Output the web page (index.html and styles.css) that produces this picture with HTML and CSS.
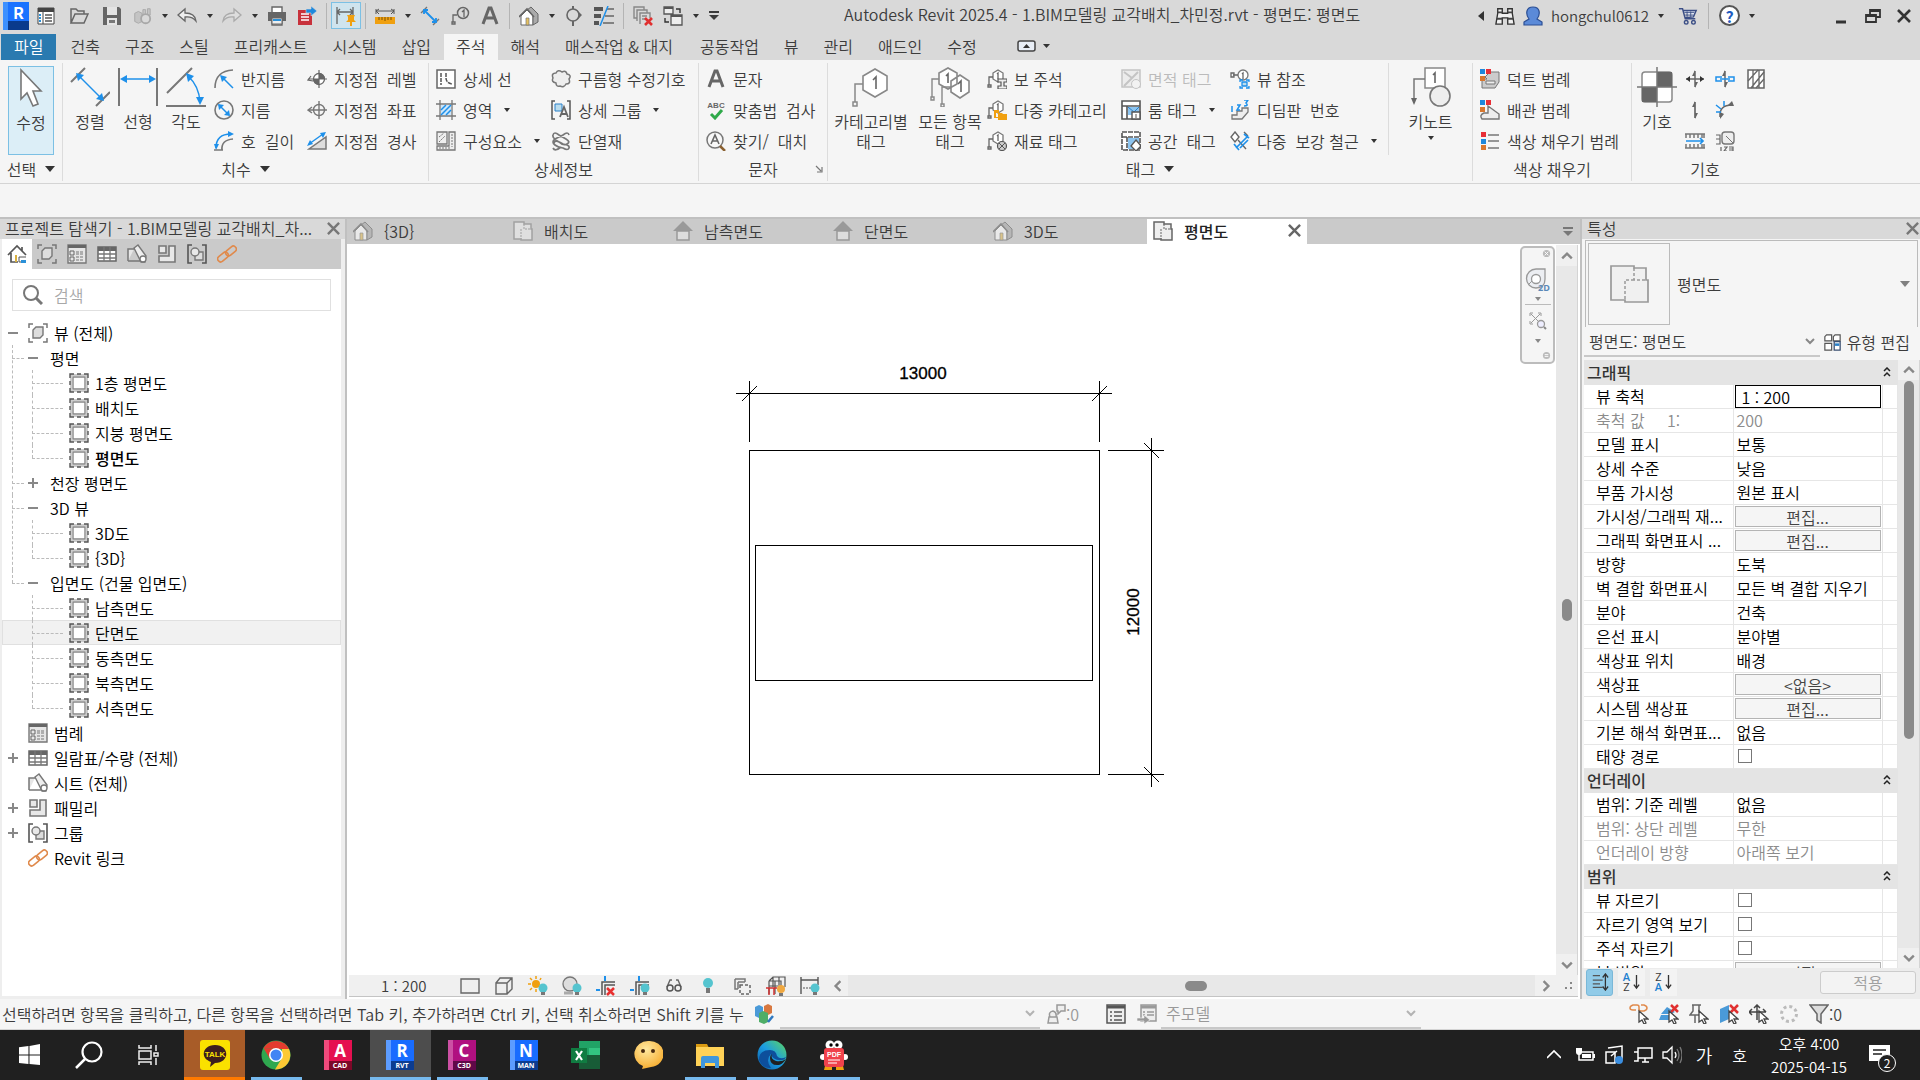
FILE: index.html
```html
<!DOCTYPE html>
<html lang="ko">
<head>
<meta charset="utf-8">
<title>Autodesk Revit 2025.4</title>
<link rel="stylesheet" href="styles.css">
</head>
<body>
<svg class="defs" aria-hidden="true">
  <defs>
    <linearGradient id="gEdge" x1="0" x2="1" y1="1" y2="0"><stop offset="0" stop-color="#0c59a4"/><stop offset=".5" stop-color="#1b9de2"/><stop offset="1" stop-color="#5fd85c"/></linearGradient>
    <radialGradient id="gFace" cx=".4" cy=".3" r=".8"><stop offset="0" stop-color="#ffe9a0"/><stop offset="1" stop-color="#f5a623"/></radialGradient>
  </defs>
  <!-- quick access bar -->
  <symbol id="list" viewBox="0 0 20 20"><path d="M2 2h16v16H2z" fill="#fff" stroke="#444"/><path d="M2 2h16v4H2z" fill="#444"/><path d="M7 6v12" stroke="#444"/><path d="M4 8v8" stroke="#2a90d8" stroke-width="2" stroke-dasharray="2 1"/><path d="M9 9h7M9 12h7M9 15h7" stroke="#555" stroke-width="1.5"/></symbol>
  <symbol id="open" viewBox="0 0 20 20"><path d="M2 17V3h5l2 2h6v3M2 17l4-9h13l-4 9z" fill="none" stroke="#666" stroke-width="1.5"/></symbol>
  <symbol id="save" viewBox="0 0 20 20"><path d="M1 1h16l2 2v16H1z" fill="#666"/><path d="M5 1h10v8H5zM5 12h10v7H5z" fill="#e4e4e4"/><path d="M7 14h6v3H7z" fill="#777"/></symbol>
  <symbol id="sync" viewBox="0 0 22 20"><path d="M3 7l4-2 4 2v9l-4 2-4-2zM12 3h3v6h-3zM17 2h3v7h-3z" fill="#c4c4c4" stroke="#a8a8a8"/><circle cx="15" cy="13" r="5" fill="#d9d9d9" stroke="#a8a8a8" stroke-width="2"/></symbol>
  <symbol id="undo" viewBox="0 0 20 20"><path d="M1 9l7-6v4q10 0 11 8-4-5-11-4v4z" fill="#eee" stroke="#666" stroke-width="1.3"/></symbol>
  <symbol id="redo" viewBox="0 0 20 20"><path d="M19 9l-7-6v4Q2 7 1 15q4-5 11-4v4z" fill="#ddd" stroke="#aaa" stroke-width="1.3"/></symbol>
  <symbol id="print" viewBox="0 0 20 20"><path d="M5 7V1h10v6M5 13h10v6H5z" fill="#fff" stroke="#666" stroke-width="1.4"/><path d="M1 6h18v9H1z" fill="#666"/><path d="M5 12h10v6H5z" fill="#eee" stroke="#666"/><path d="M6 14h8" stroke="#2a90d8" stroke-width="2"/></symbol>
  <symbol id="pdf" viewBox="0 0 20 20"><path d="M1 4h14v15H1z" fill="#c8323c"/><path d="M4 8h8M4 11h8M4 14h8" stroke="#fff" stroke-width="1.5"/><path d="M9 3h5V0l6 5-6 5V7H9z" fill="#1e88dc" stroke="#d9d9d9" stroke-width=".6"/></symbol>
  <symbol id="dimpin" viewBox="0 0 20 20"><path d="M1 1v17M17 1v9M1 6h16M4 3L1 6l3 3M14 3l3 3-3 3" fill="none" stroke="#666" stroke-width="1.3"/><path d="M11 9h8l-1 2v3l2 2H10l2-2v-3zM14 16h2v4h-2z" fill="#f0a010"/></symbol>
  <symbol id="measure" viewBox="0 0 20 20"><path d="M1 3v5M19 3v5M1 5h18M4 3L1 5l3 3M16 3l3 2-3 3" fill="none" stroke="#555"/><path d="M0 11h20v7H0z" fill="#f0a010"/><path d="M4 11v3M7 11v3M10 11v4M13 11v3M16 11v3" stroke="#7a5000"/></symbol>
  <symbol id="aligned" viewBox="0 0 20 20"><path d="M1 7l6-6M13 19l6-6" stroke="#777" stroke-width="1.4"/><path d="M4 4l12 12M4 8V4h4M12 16h4v-4" fill="none" stroke="#1e90ea" stroke-width="1.8"/></symbol>
  <symbol id="tagq" viewBox="0 0 20 20"><circle cx="13" cy="7" r="5.500" fill="none" stroke="#666" stroke-width="1.5"/><path d="M12 6l2-2v7M7 9H3v7M2 16h3v2H2z" fill="none" stroke="#666" stroke-width="1.3"/></symbol>
  <symbol id="letterA" viewBox="0 0 20 20"><path d="M3 18L9 2h2l6 16M6 12h8" fill="none" stroke="#666" stroke-width="3"/></symbol>
  <symbol id="house" viewBox="0 0 20 20"><path d="M2 10l6-6 6 6v9H2z" fill="#fff" stroke="#666"/><path d="M8 4l4-3 7 7v8l-5 3v-9z" fill="#aaa" stroke="#666"/><path d="M0 11l8-8 7 8" fill="none" stroke="#666" stroke-width="1.6"/><path d="M7 12h3v7H7z" fill="#e5c060" stroke="#777" stroke-width=".7"/></symbol>
  <symbol id="section" viewBox="0 0 20 20"><circle cx="9" cy="9" r="6" fill="none" stroke="#666" stroke-width="1.6"/><path d="M9 0v3M9 15v5" stroke="#666" stroke-width="2"/><path d="M12 3l6 6-6 6q6-6 0-12" fill="#666"/></symbol>
  <symbol id="thin" viewBox="0 0 20 20"><path d="M0 3h9M0 10h7M0 17h5" stroke="#555" stroke-width="4"/><path d="M13 3h7M11 10h9M9 17h11" stroke="#666" stroke-width="1.3"/><path d="M14 0L6 20" stroke="#1e90ea" stroke-width="1.5"/></symbol>
  <symbol id="closeh" viewBox="0 0 20 20"><path d="M4 12H1V1h10v3M4 15V4h10v3M7 18V7h10v5M9 10h5M9 13h3" fill="none" stroke="#888" stroke-width="1.4"/><path d="M12 12l7 7M19 12l-7 7" stroke="#e03030" stroke-width="2.600"/></symbol>
  <symbol id="switchw" viewBox="0 0 20 20"><path d="M1 1h9v7H1zM8 9h11v10H8z" fill="#eee" stroke="#555" stroke-width="1.3"/><path d="M1 2h9M8 10h11" stroke="#555" stroke-width="2"/><path d="M13 3h4v4M6 16H2v-4" fill="none" stroke="#333" stroke-width="1.4"/></symbol>
  <symbol id="binoc" viewBox="0 0 22 20"><path d="M1 19l2-12V2h5v5h6V2h5v5l2 12h-7v-7H8v7z" fill="#f0f0f0" stroke="#333" stroke-width="1.5"/><path d="M2 13h6M14 13h6M3 6h5M14 6h5" stroke="#444" stroke-width="2"/></symbol>
  <symbol id="user" viewBox="0 0 20 20"><path d="M6 13q-3-4-2-8 1-4 6-4t6 4q1 4-2 8l5 3v3H1v-3z" fill="#5b8ad8" stroke="#2c4f94" stroke-width="1.2"/></symbol>
  <symbol id="cart" viewBox="0 0 22 20"><path d="M1 2h4l3 11h11M5 4h15l-3 7-9 1" fill="#dfe5f2" stroke="#3c4f86" stroke-width="1.6"/><path d="M7 6h11M8 9h9M10 5v6M14 5v6" stroke="#3c4f86"/><circle cx="9" cy="17" r="2" fill="none" stroke="#3c4f86" stroke-width="1.500"/><circle cx="17" cy="17" r="2" fill="none" stroke="#3c4f86" stroke-width="1.500"/></symbol>
  <symbol id="x" viewBox="0 0 14 14"><path d="M1 1l12 12M13 1L1 13" stroke="currentColor" stroke-width="2.600"/></symbol>
  <symbol id="down" viewBox="0 0 8 6"><path d="M1 1h6L4 5z" fill="#333"/></symbol>
  <symbol id="bigdown" viewBox="0 0 10 8"><path d="M0 1h10L5 7z" fill="#333"/></symbol>
  <symbol id="chev" viewBox="0 0 10 10"><path d="M1 3l4 4 4-4" fill="none" stroke="#888" stroke-width="2"/></symbol>
  <symbol id="menu" viewBox="0 0 10 10"><path d="M0 1h10" stroke="currentColor" stroke-width="2"/><path d="M0 4h10L5 9z" fill="currentColor"/></symbol>
  <!-- ribbon, large -->
  <symbol id="cursor" viewBox="0 0 24 40"><path d="M2 1v29l6-6 6 13 5-2-5-13h8z" fill="#fff" stroke="#777" stroke-width="1.600"/></symbol>
  <symbol id="Laligned" viewBox="0 0 40 40"><path d="M1 15L15 1M26 39L40 25" stroke="#777" stroke-width="2"/><path d="M8 8l24 24" stroke="#1e90ea" stroke-width="1.500"/><path d="M6 6l8 2-6 6zM34 34l-8-2 6-6z" fill="#1e90ea"/></symbol>
  <symbol id="Llinear" viewBox="0 0 40 40"><path d="M1 1v38M39 1v38" stroke="#777" stroke-width="2"/><path d="M4 12h32" stroke="#1e90ea" stroke-width="1.500"/><path d="M2 12l7-4v8zM38 12l-7-4v8z" fill="#1e90ea"/></symbol>
  <symbol id="Langle" viewBox="0 0 40 40"><path d="M0 39h40M1 26L26 1" stroke="#777" stroke-width="2"/><path d="M22 9q11 10 12 26" fill="none" stroke="#1e90ea" stroke-width="1.500"/><path d="M20 6l8 3-6 6zM34 38l-4-8h8z" fill="#1e90ea"/></symbol>
  <symbol id="Ltag" viewBox="0 0 40 40"><path d="M12 9l12-7 12 7v14l-12 7-12-7z" fill="#fff" stroke="#888" stroke-width="1.600"/><path d="M12 17H4v18M2 35h4v4H2z" fill="none" stroke="#888" stroke-width="1.500"/><path d="M22 13l3-3v12" fill="none" stroke="#666" stroke-width="1.600"/></symbol>
  <symbol id="Ltags" viewBox="0 0 40 40"><path d="M9 6l9-5 9 5v11l-9 5-9-5zM21 14l9-6 9 6v11l-9 6-9-6z" fill="#fff" stroke="#888" stroke-width="1.600"/><path d="M9 12H2v18M1 30h3v3H1zM21 20h-9v17M11 37h3v3h-3z" fill="none" stroke="#888" stroke-width="1.400"/><path d="M16 9l2-2v9M28 17l3-3v11" fill="none" stroke="#666" stroke-width="1.600"/></symbol>
  <symbol id="Lkey" viewBox="0 0 40 40"><path d="M14 1h20v20H14z" fill="#fff" stroke="#888" stroke-width="1.500"/><path d="M22 8l2-2v10" fill="none" stroke="#666" stroke-width="1.600"/><path d="M14 12H3v22" fill="none" stroke="#777" stroke-width="1.500"/><path d="M0 31h6l-3 7z" fill="#666"/><circle cx="29" cy="29" r="10" fill="#eee" stroke="#777" stroke-width="1.600"/></symbol>
  <symbol id="Lsym" viewBox="0 0 40 40"><rect x="5" y="5" width="30" height="30" rx="3" fill="#fff" stroke="#888" stroke-width="1.500"/><path d="M20 5h15v15H20zM5 20h15v15H5z" fill="#666"/><path d="M20 0v40M0 20h40" stroke="#777" stroke-width="1.500"/></symbol>
  <!-- ribbon, small -->
  <symbol id="radius" viewBox="0 0 20 20"><path d="M1 19Q1 2 19 1" fill="none" stroke="#777" stroke-width="1.600"/><path d="M9 9l10 10" stroke="#1e90ea" stroke-width="1.500"/><path d="M6 6l7 2-5 5z" fill="#1e90ea"/></symbol>
  <symbol id="diam" viewBox="0 0 20 20"><circle cx="10" cy="10" r="9" fill="none" stroke="#777" stroke-width="1.600"/><path d="M5 5l10 10" stroke="#1e90ea" stroke-width="1.500"/><path d="M4 4l6 1-5 5zM16 16l-6-1 5-5z" fill="#1e90ea"/></symbol>
  <symbol id="arc" viewBox="0 0 20 20"><path d="M8 19Q7 9 19 8" fill="none" stroke="#777" stroke-width="1.700"/><path d="M2 17Q2 3 17 3" fill="none" stroke="#1e90ea" stroke-width="1.500"/><path d="M14 0l6 3-6 3zM0 13h5l-3 6z" fill="#1e90ea"/><path d="M0 19h9" stroke="#777" stroke-width="1.500"/></symbol>
  <symbol id="spotE" viewBox="0 0 20 20"><circle cx="12" cy="10" r="5.500" fill="#fff" stroke="#666" stroke-width="1.300"/><path d="M12 10V4a6 6 0 0 1 6 6zM12 10v6a6 6 0 0 1-6-6z" fill="#666"/><path d="M12 1v18M1 10h19M4 7l-3 4 5 1" fill="none" stroke="#666" stroke-width="1.200"/></symbol>
  <symbol id="spotC" viewBox="0 0 20 20"><circle cx="12" cy="10" r="5.500" fill="none" stroke="#777" stroke-width="1.400"/><path d="M12 1v18M1 10h19M5 7l-4 3 4 3" fill="none" stroke="#777" stroke-width="1.400"/></symbol>
  <symbol id="spotS" viewBox="0 0 20 20"><path d="M2 18h17V6z" fill="#ddd" stroke="#777" stroke-width="1.500"/><path d="M2 13L16 3" stroke="#1e90ea" stroke-width="1.500"/><path d="M0 15l3-6 3 4zM19 1l-6 1 3 5z" fill="#1e90ea"/></symbol>
  <symbol id="dline" viewBox="0 0 20 20"><path d="M1 1h18v18H1z" fill="#fff" stroke="#666" stroke-width="1.500"/><path d="M5 4v12M10 4v5q0 5 6 6" fill="none" stroke="#555" stroke-width="1.500" stroke-dasharray="4 1"/></symbol>
  <symbol id="region" viewBox="0 0 20 20"><path d="M4 0v20M16 0v20M0 4h20M0 16h20" stroke="#777" stroke-width="1.300"/><path d="M5 5h10v10H5z" fill="#cce6fa"/><path d="M5 10l5-5M5 15L15 5M10 15l5-5" stroke="#1e90ea" stroke-width="1.500"/></symbol>
  <symbol id="comp" viewBox="0 0 20 20"><path d="M1 1h10v12H1zM13 1h6v18H1v-4h12z" fill="#eee" stroke="#777" stroke-width="1.300"/><path d="M3 6l5-4M3 11l6-6M16 3v13M3 17h12" stroke="#777" stroke-dasharray="2 1"/></symbol>
  <symbol id="cloud" viewBox="0 0 20 20"><path d="M5 14Q0 13 2 9q-2-5 3-5 2-4 6-1 4-2 5 2 5 1 2 5 2 5-3 5-2 4-6 2-4 1-4-3z" fill="#eee" stroke="#777" stroke-width="1.500"/></symbol>
  <symbol id="dgroup" viewBox="0 0 20 20"><path d="M4 1H1v18h3M16 1h3v18h-3" fill="none" stroke="#555" stroke-width="1.500"/><path d="M4 4h7v7H4z" fill="#bde" stroke="#2a80c8"/><path d="M9 17l4-10 4 10M10 14h6" fill="none" stroke="#666" stroke-width="1.800"/></symbol>
  <symbol id="insul" viewBox="0 0 20 20"><path d="M2 4Q3 0 8 4l7 4q5 3 1 5t-8-2Q1 7 2 4zM18 4q-1-4-6 0L4 8q-4 3 0 6t8 3q5 3 6 0t-6-4Q4 8 3 12M2 17q2 4 8-1" fill="none" stroke="#777" stroke-width="1.700"/></symbol>
  <symbol id="find" viewBox="0 0 20 20"><circle cx="9" cy="9" r="8" fill="#f8f8f8" stroke="#777" stroke-width="1.500"/><path d="M5 13l4-9 4 9M6 10h6" fill="none" stroke="#666" stroke-width="1.600"/><path d="M14 15l5 5" stroke="#8a6030" stroke-width="2.500"/></symbol>
  <symbol id="hextag" viewBox="0 0 20 20"><path d="M6 4l5-3 5 3v6l-5 3-5-3z" fill="#fff" stroke="#777" stroke-width="1.300"/><path d="M10 5l1-1v6M6 8H2v8M1 16h3v2H1z" fill="none" stroke="#666" stroke-width="1.300"/></symbol>
  <symbol id="beam" viewBox="0 0 20 20"><use href="#hextag"/><path d="M11 10h9v3h-3v4h3v3h-9v-3h3v-4h-3z" fill="#eee" stroke="#555" stroke-width="1.200"/></symbol>
  <symbol id="multi" viewBox="0 0 20 20"><use href="#hextag"/><path d="M7 10h5v3h-3v4h2v-4h4l1 1h4v6h-9v-2H7z" fill="#f0a010"/></symbol>
  <symbol id="mat" viewBox="0 0 20 20"><use href="#hextag"/><circle cx="15" cy="15" r="4.500" fill="#ccc" stroke="#555" stroke-width="1.200"/><path d="M12 12l6 6M18 12l-6 6" stroke="#555"/></symbol>
  <symbol id="area" viewBox="0 0 20 20"><path d="M1 1h18v17H1z" fill="#ececec" stroke="#c4c4c4" stroke-width="1.500"/><path d="M3 17L17 3M3 3l8 6" stroke="#c4c4c4" stroke-width="2"/><circle cx="15" cy="15" r="4.500" fill="#f2f2f2" stroke="#c4c4c4"/></symbol>
  <symbol id="room" viewBox="0 0 20 20"><path d="M1 1h18v18H1zM1 6h18M6 6v13" fill="#fff" stroke="#555" stroke-width="1.600"/><path d="M7 7h11v8H7z" fill="#8cc4f0"/><path d="M7 7l6 5 5-5" fill="none" stroke="#2a80c8"/><path d="M11 12h8v7h-8z" fill="#fff" stroke="#555" stroke-width="1.400"/><path d="M15 14v4" stroke="#555"/></symbol>
  <symbol id="space" viewBox="0 0 20 20"><path d="M1 1h18v18H1zM1 6h18M6 6v13" fill="#fff" stroke="#555" stroke-width="1.600" stroke-dasharray="5 1"/><path d="M7 7h11v11H7z" fill="#8cc4f0"/><path d="M15 9l5 6-5 5-5-5z" fill="#fff" stroke="#555" stroke-width="1.300"/></symbol>
  <symbol id="vref" viewBox="0 0 20 20"><circle cx="13" cy="6" r="5" fill="#fff" stroke="#777" stroke-width="1.300"/><path d="M12 5l1-1v6M8 6H3M1 4h3v4H1z" fill="none" stroke="#666" stroke-width="1.300"/><path d="M10 13v-2h3M16 11h3v2M19 17v2h-3M13 19h-3v-2M12 13h5v4h-5z" fill="#bde" stroke="#1e90ea" stroke-width="1.300"/></symbol>
  <symbol id="tread" viewBox="0 0 20 20"><path d="M2 19v-4h5v-4h5V8h6v4l-6 7z" fill="#eee" stroke="#777" stroke-width="1.300"/><path d="M2 6v6M7 5h3l-3 5h3M14 0h4l-2 3q3 3-2 3" fill="none" stroke="#1e90ea" stroke-width="1.500"/></symbol>
  <symbol id="rebar" viewBox="0 0 20 20"><path d="M5 1l4 5-4 5-4-5zM14 1l4 4M8 9l8 9" fill="#fff" stroke="#666" stroke-width="1.400"/><path d="M18 5L6 17M18 9l-8 8M4 13l5 6M14 3l5 4" stroke="#1e90ea" stroke-width="1.700"/></symbol>
  <symbol id="rgb" viewBox="0 0 20 20"><path d="M0 0h5v5H0z" fill="#1e88dc"/><path d="M6 0h5v5H6z" fill="#e83038"/><path d="M0 7h5v5H0z" fill="#d87830"/></symbol>
  <symbol id="duct" viewBox="0 0 20 20"><path d="M5 8l5-5h9v10l-4 6H2v-9h5z" fill="#ccc" stroke="#777"/><path d="M6 12h9v3H6z" fill="#eee" stroke="#777"/><use href="#rgb"/></symbol>
  <symbol id="pipe" viewBox="0 0 20 20"><path d="M8 6l11 8v5H2q-3-4 2-6h4z" fill="#eee" stroke="#777" stroke-width="1.400"/><use href="#rgb"/></symbol>
  <symbol id="fill" viewBox="0 0 20 20"><path d="M1 1h5v5H1z" fill="#e83038"/><path d="M1 8h5v5H1z" fill="#1e88dc"/><path d="M1 14h5v5H1z" fill="#d87830"/><path d="M8 4h11M8 10h11M8 17h11" stroke="#777" stroke-width="1.500"/></symbol>
  <symbol id="span" viewBox="0 0 20 20"><path d="M10 2v16M1 10h18" stroke="#666" stroke-width="1.500"/><path d="M10 1v6H7zM10 19v-6h3z" fill="#666"/><path d="M1 10l4-3v6zM19 10l-4-3v6z" fill="#333"/></symbol>
  <symbol id="bsys" viewBox="0 0 20 20"><path d="M10 2v16" stroke="#666" stroke-width="1.500"/><path d="M10 1v6H7zM10 19v-6h3z" fill="#666"/><path d="M7 8H1v4h6M13 8h6v4h-6M5 10h10" fill="none" stroke="#1e90ea" stroke-width="1.500"/></symbol>
  <symbol id="hatch" viewBox="0 0 20 20"><path d="M2 1h16v18H2z" fill="#fff" stroke="#666" stroke-width="1.500"/><path d="M7 1v18M13 1v18M2 12L12 1M5 19L18 3M10 19l8-9" stroke="#666" stroke-width="1.300"/></symbol>
  <symbol id="sarrow" viewBox="0 0 20 20"><path d="M10 2v16" stroke="#666" stroke-width="1.700"/><path d="M10 1v6H7zM10 19v-6h3z" fill="#666"/></symbol>
  <symbol id="fan" viewBox="0 0 20 20"><path d="M5 17Q4 5 17 5" fill="none" stroke="#666" stroke-width="1.500"/><path d="M19 6h-7l5-5zM5 19v-7l4 2z" fill="#666"/><path d="M1 5l5 4M9 1v5M1 12h5" stroke="#1e90ea" stroke-width="1.500"/></symbol>
  <symbol id="path" viewBox="0 0 20 20"><path d="M0 3h20M0 17h20M1 3v4M5 3v4M9 3v4M13 3v4M17 3v4M19 3v4M1 13v4M5 13v4M9 13v4M13 13v4M17 13v4M19 13v4" stroke="#777" stroke-width="1.500"/><path d="M1 10h17M15 7l3 3-3 3" fill="none" stroke="#1e90ea" stroke-width="1.700"/></symbol>
  <symbol id="p123" viewBox="0 0 20 20"><rect x="7" y="1" width="12" height="12" rx="3" fill="#eee" stroke="#777" stroke-width="1.400"/><path d="M11 5l7 7" stroke="#777"/><path d="M1 4h4v9H1M1 8h4M6 16v4M9 16h3l-3 4h3M14 16h4v4h-4M14 18h4" fill="none" stroke="#666" stroke-width="1.200"/></symbol>
  <!-- project browser -->
  <symbol id="pb-home" viewBox="0 0 20 20"><path d="M1 11l9-9 9 9M4 9v9h7M15 7V3" fill="none" stroke="#555" stroke-width="1.700"/><path d="M8 11h2v7H8z" fill="#d8b040"/><path d="M12 13h7M12 13v5h3" stroke="#555" fill="none"/><path d="M14 16h5v3h-5z" fill="#2a90d8"/></symbol>
  <symbol id="views" viewBox="0 0 20 20"><path d="M1 5V1h4M15 1h4v4M19 15v4h-4M5 19H1v-4" fill="none" stroke="#777" stroke-width="1.500"/><path d="M5 7l3-3h7v8l-3 3H5z" fill="#ddd" stroke="#777" stroke-width="1.400"/></symbol>
  <symbol id="legend" viewBox="0 0 20 20"><path d="M1 1h18v18H1z" fill="#e6e6e6" stroke="#777" stroke-width="1.400"/><path d="M1 1h18v3H1z" fill="#666"/><path d="M3 7h4v4H3zM3 13h4v4H3z" fill="none" stroke="#666"/><path d="M9 8h8M9 10h8M9 13h8M9 16h8" stroke="#777" stroke-width="1.200" stroke-dasharray="3 1"/></symbol>
  <symbol id="sched" viewBox="0 0 20 20"><path d="M1 3h18v14H1z" fill="#fff" stroke="#666" stroke-width="1.500"/><path d="M1 3h18v4H1z" fill="#666"/><path d="M7 3v14M13 3v14M1 10h18M1 14h18" stroke="#777" stroke-width="1.300"/></symbol>
  <symbol id="sheet" viewBox="0 0 20 20"><path d="M1 17V5h6M1 17h14" fill="#e6e6e6" stroke="#777" stroke-width="1.500"/><path d="M7 4l4-3 8 11-1 6h-4z" fill="#eee" stroke="#777" stroke-width="1.400"/><circle cx="16" cy="15" r="3" fill="#fff" stroke="#777" stroke-width="1.300"/></symbol>
  <symbol id="family" viewBox="0 0 20 20"><path d="M2 2h7v7H2zM12 2h6v16H2v-6h10z" fill="#e8e8e8" stroke="#777" stroke-width="1.600"/></symbol>
  <symbol id="group" viewBox="0 0 20 20"><path d="M5 1H1v18h4M15 1h4v18h-4" fill="none" stroke="#555" stroke-width="1.600"/><path d="M8 8h8v8H8z" fill="#ddd" stroke="#777" stroke-width="1.400"/><circle cx="8" cy="8" r="4" fill="#e8e8e8" stroke="#777" stroke-width="1.400"/></symbol>
  <symbol id="link" viewBox="0 0 20 20"><g fill="none" stroke="#e08a4c" stroke-width="1.600"><rect x="8" y="4" width="12" height="6" rx="3" transform="rotate(-40 14 7)"/><rect x="0" y="10" width="12" height="6" rx="3" transform="rotate(-40 6 13)"/></g></symbol>
  <symbol id="plan" viewBox="0 0 20 20"><path d="M2 2h16v16H2z" fill="none" stroke="#ccc" stroke-width="2"/><path d="M4 4h12v12H4z" fill="#fff" stroke="#888" stroke-width="1.400"/><path d="M1 5V1h4M15 1h4v4M19 15v4h-4M5 19H1v-4M8 1h4M8 19h4M1 8v4M19 8v4" fill="none" stroke="#555" stroke-width="1.400"/></symbol>
  <symbol id="mag" viewBox="0 0 20 20"><circle cx="8" cy="8" r="7" fill="none" stroke="#777" stroke-width="2"/><path d="M13 13l6 6" stroke="#777" stroke-width="3"/></symbol>
  <symbol id="minus" viewBox="0 0 10 10"><path d="M0 5h10" stroke="#888" stroke-width="2"/></symbol>
  <symbol id="plus" viewBox="0 0 10 10"><path d="M0 5h10M5 0v10" stroke="#888" stroke-width="2"/></symbol>
  <!-- document tabs -->
  <symbol id="floor" viewBox="0 0 20 20"><path d="M1 1h10v2h7v5h1v11H8v-1H1z" fill="#eee" stroke="currentColor" stroke-width="1.500"/><path d="M11 3v5h7M8 8v10" fill="none" stroke="currentColor" stroke-dasharray="2 1"/></symbol>
  <symbol id="elev" viewBox="0 0 20 20"><path d="M10 0l10 10H0z" fill="#999"/><path d="M4 10h12v9H4z" fill="#ddd" stroke="#999" stroke-width="1.500"/></symbol>
  <!-- view control bar -->
  <symbol id="v1" viewBox="0 0 20 20"><path d="M1 3h18v14H1z" fill="#eee" stroke="#666" stroke-width="1.400"/></symbol>
  <symbol id="v2" viewBox="0 0 20 20"><path d="M2 7h11v11H2zM2 7l4-5h12v11l-5 5M13 7l5-5" fill="#eee" stroke="#666" stroke-width="1.400"/></symbol>
  <symbol id="bulb" viewBox="0 0 20 20"><circle cx="15" cy="12" r="4.500" fill="#55c4cf"/><path d="M13 16h4v3h-4z" fill="#777"/></symbol>
  <symbol id="v3" viewBox="0 0 20 20"><circle cx="8" cy="8" r="4" fill="#f0a010"/><path d="M8 0v3M8 13v3M0 8h3M2 2l2 2M13 2l-1 2M2 14l2-2" stroke="#f0a010" stroke-width="1.500"/><use href="#bulb"/></symbol>
  <symbol id="v4" viewBox="0 0 20 20"><circle cx="8" cy="8" r="7" fill="#ddd" stroke="#777" stroke-width="1.300"/><path d="M2 17h9" stroke="#aaa" stroke-width="3"/><use href="#bulb"/></symbol>
  <symbol id="crop" viewBox="0 0 20 20"><path d="M6 19V6h13M9 19V9h10" fill="none" stroke="#555" stroke-width="1.500"/><path d="M9 0v5M0 14h4" stroke="#1e90ea" stroke-width="2"/></symbol>
  <symbol id="v5" viewBox="0 0 20 20"><use href="#crop"/><path d="M11 12l7 7M18 12l-7 7" stroke="#e83030" stroke-width="2.500"/></symbol>
  <symbol id="v6" viewBox="0 0 20 20"><use href="#crop"/><use href="#bulb"/></symbol>
  <symbol id="v7" viewBox="0 0 20 20"><path d="M3 11l3-7h2M17 11l-3-7h-2" fill="none" stroke="#666" stroke-width="1.400"/><circle cx="6" cy="12" r="3" fill="none" stroke="#555" stroke-width="1.500"/><circle cx="14" cy="12" r="3" fill="none" stroke="#555" stroke-width="1.500"/></symbol>
  <symbol id="v8" viewBox="0 0 20 20"><circle cx="10" cy="7" r="5" fill="#55c4cf"/><path d="M8 12h4v5H8z" fill="#777"/></symbol>
  <symbol id="v9" viewBox="0 0 20 20"><path d="M3 3h10v3M3 3v10h3M6 6h7M6 6v7" fill="none" stroke="#777" stroke-width="1.500"/><path d="M8 9h10v9H8z" fill="none" stroke="#666" stroke-width="1.500" stroke-dasharray="3 2"/></symbol>
  <symbol id="v10" viewBox="0 0 20 20"><path d="M3 5l4-4h12v10M3 5h12v8M3 5v13M9 5v13M3 10h12M7 1v10M13 1v8" fill="none" stroke="#555" stroke-width="1.200"/><path d="M0 12h11M3 12v7M8 12v7" stroke="#d03030" stroke-width="1.500"/><circle cx="15" cy="13" r="4" fill="#f0a840"/><path d="M13 17h4v3h-4z" fill="#777"/></symbol>
  <symbol id="v11" viewBox="0 0 20 20"><path d="M1 1v17M18 1v8M1 4h17" stroke="#555" stroke-width="1.400"/><path d="M3 12h8" stroke="#555" stroke-dasharray="2 1"/><use href="#bulb"/></symbol>
  <!-- status bar -->
  <symbol id="ws" viewBox="0 0 20 20"><path d="M1 3l4-2 4 2v9l-4 2-4-2z" fill="#4a9ad8"/><path d="M10 2l4-2 4 2v7l-4 2-4-2z" fill="#d87840"/><path d="M5 9l4-2 5 2v9l-4 2-5-2z" fill="#4fae68"/><path d="M14 18l5-6" stroke="#2f78c0" stroke-width="2.500"/></symbol>
  <symbol id="person" viewBox="0 0 20 20"><path d="M2 19l1-6h8l1 6zM4 13q-2-5 3-6 4 1 3 6M11 1h8v6h-4l-3 3V7h-1z" fill="#eee" stroke="#999" stroke-width="1.500"/></symbol>
  <symbol id="opts" viewBox="0 0 20 20"><path d="M1 1h18v18H1z" fill="#eee" stroke="currentColor" stroke-width="1.500"/><path d="M1 3h18" stroke="currentColor" stroke-width="3"/><path d="M4 8h2M8 8h8M4 12h2M8 12h8M4 16h2M8 16h8" stroke="currentColor" stroke-width="1.700"/></symbol>
  <symbol id="opts2" viewBox="0 0 20 20"><path d="M4 1h15v16H4z" fill="#eee" stroke="currentColor" stroke-width="1.500"/><path d="M4 3h15" stroke="currentColor" stroke-width="3"/><path d="M6 8h2M10 8h7M6 11h2M10 11h7" stroke="currentColor" stroke-width="1.700"/><path d="M0 14h7v-3l6 5-6 4v-3H0z" fill="currentColor" stroke="#f5f5f5" stroke-width=".6"/></symbol>
  <symbol id="arr" viewBox="0 0 20 20"><path d="M10 7v11l3-2 2 4 2-1-2-4h4z" fill="#fff" stroke="#444" stroke-width="1.300"/></symbol>
  <symbol id="s1" viewBox="0 0 20 20"><path d="M7 6H4Q1 6 1 4t3-3h4q2 0 2 2v2q0 2 2 2h3q3-1 3-3t-3-3h-3" fill="none" stroke="#e08a4c" stroke-width="1.500"/><use href="#arr"/></symbol>
  <symbol id="s2" viewBox="0 0 20 20"><path d="M8 3l8 5-4 2H2zM2 11h9v5H0z" fill="#4a9ad8"/><path d="M12 1l7 7M19 1l-7 7" stroke="#e03030" stroke-width="2.500"/><use href="#arr"/></symbol>
  <symbol id="s3" viewBox="0 0 20 20"><path d="M3 1h9M4 1v6l-3 4h11l-2-4V1M6 11v8" fill="none" stroke="#666" stroke-width="1.500"/><use href="#arr"/></symbol>
  <symbol id="s4" viewBox="0 0 20 20"><path d="M1 5l9-4v14l-9 4z" fill="#4a9ad8"/><path d="M11 1l8 8M19 1l-8 8" stroke="#e03030" stroke-width="2.500"/><use href="#arr"/></symbol>
  <symbol id="s5" viewBox="0 0 20 20"><path d="M8 1v15M0 8h17M5 4l3-3 3 3M3 5L0 8l3 3M14 5l3 3" fill="none" stroke="#444" stroke-width="1.500"/><use href="#arr"/></symbol>
  <symbol id="s6" viewBox="0 0 20 20"><circle cx="10" cy="10" r="7.500" fill="none" stroke="#bbb" stroke-width="3" stroke-dasharray="3 2.900"/></symbol>
  <symbol id="filter" viewBox="0 0 20 20"><path d="M1 1h18l-7 9v9l-4-3v-6z" fill="#ddd" stroke="#666" stroke-width="1.500"/></symbol>
  <symbol id="etype" viewBox="0 0 20 20"><path d="M1 3l2-2h6v7H1zM11 3l2-2h6v7h-8zM1 11h8v8H1z" fill="#fff" stroke="#555" stroke-width="1.400"/><path d="M12 9h7v10h-7z" fill="#fff" stroke="#3a4f70" stroke-width="1.500"/><path d="M13 11h5v3h-5z" fill="#2a80c8"/></symbol>
  <symbol id="dbl" viewBox="0 0 8 10"><path d="M1 4l3-3 3 3M1 9l3-3 3 3" fill="none" stroke="#222" stroke-width="1.500"/></symbol>
  <symbol id="sortg" viewBox="0 0 20 20"><path d="M2 3h8M2 8h11M2 12h8M2 16h11" stroke="#555" stroke-width="1.400"/><path d="M16 1v18M13 5l3-4 3 4M13 15l3 4 3-4" fill="none" stroke="#333" stroke-width="1.400"/></symbol>
  <symbol id="darrow" viewBox="0 0 8 20"><path d="M4 2v15M1 13l3 4 3-4" fill="none" stroke="#333" stroke-width="1.500"/></symbol>
  <!-- taskbar -->
  <symbol id="win" viewBox="0 0 20 20"><path d="M0 3l9-1v8H0zM10 2l10-2v10H10zM0 11h9v8l-9-1zM10 11h10v9l-10-1z" fill="#fff"/></symbol>
  <symbol id="tsearch" viewBox="0 0 28 28"><circle cx="17" cy="11" r="9.500" fill="none" stroke="#fff" stroke-width="2.200"/><path d="M10 18l-9 9" stroke="#fff" stroke-width="2.500"/></symbol>
  <symbol id="tview" viewBox="0 0 22 22"><path d="M1 1v3h12V1M1 21v-3h12v3M1 7h12v8H1zM18 1v6M18 14v7M16 9h4v3h-4z" fill="none" stroke="#eee" stroke-width="1.500"/></symbol>
  <symbol id="chrome" viewBox="0 0 30 30"><circle cx="15" cy="15" r="14.500" fill="#2fa84f"/><path d="M2.500 8A14.500 14.500 0 0 1 28 9H15z" fill="#e33b2e"/><path d="M2.500 8L9 19l6-10z" fill="#e33b2e"/><path d="M28 9A14.500 14.500 0 0 1 14 29.500L21 18V9z" fill="#fcc934"/><circle cx="15" cy="15" r="7" fill="#fff"/><circle cx="15" cy="15" r="5.500" fill="#4285f4"/></symbol>
  <symbol id="excel" viewBox="0 0 30 30"><path d="M8 1h21v28H8z" fill="#21a366"/><path d="M8 15h21v14H8z" fill="#185c37"/><path d="M18 8h11v7H18z" fill="#33c481"/><path d="M0 8h16v15H0z" fill="#107c41"/><path d="M5 11l6 9M11 11l-6 9" stroke="#fff" stroke-width="2.200"/></symbol>
  <symbol id="face" viewBox="0 0 30 30"><path d="M15 1a14 13 0 0 1 3 26l-9 2 1-3A14 13 0 0 1 15 1z" fill="url(#gFace)"/><circle cx="10" cy="11" r="2" fill="#4a2b10"/><circle cx="20" cy="11" r="2" fill="#4a2b10"/></symbol>
  <symbol id="folder" viewBox="0 0 30 30"><path d="M1 4h11l2 4h-13z" fill="#d99a12"/><path d="M1 7h28v19H1z" fill="#ffd257"/><path d="M6 28V18q0-2 2-2h14q2 0 2 2v10h-4v-5h-10v5z" fill="#3f97dc"/></symbol>
  <symbol id="edge" viewBox="0 0 30 30"><circle cx="15" cy="15" r="14.500" fill="url(#gEdge)"/><path d="M2 20q0-10 11-10 6 0 7 6 3 4 9 1-1 3-4 3-9 1-11-6-6 6 0 14-8 1-12-8z" fill="#0d4f9c"/><path d="M15 14q-2 5 4 7 6 1 10-2-3 5-7 6-9 1-9-7 0-3 2-4z" fill="#202020"/></symbol>
  <symbol id="pdfbot" viewBox="0 0 30 30"><path d="M6 26h7v4H5zM17 26h7l1 4h-8z" fill="#f0a010"/><circle cx="11" cy="5" r="4.500" fill="#fff"/><circle cx="19" cy="5" r="4.500" fill="#fff"/><circle cx="12" cy="5" r="1.700"/><circle cx="18" cy="5" r="1.700"/><circle cx="4" cy="17" r="3" fill="#fff"/><circle cx="26" cy="17" r="3" fill="#fff"/><rect x="5" y="8" width="20" height="19" rx="3" fill="#f0424c"/><path d="M9 20h12M9 23h9" stroke="#fff"/></symbol>
  <symbol id="tup" viewBox="0 0 14 14"><path d="M0 10l7-7 7 7" fill="none" stroke="#fff" stroke-width="1.600"/></symbol>
  <symbol id="batt" viewBox="0 0 20 20"><path d="M4 7h14v8H4z" fill="none" stroke="#fff" stroke-width="1.500"/><path d="M7 9h9v4H7zM18 9h2v4h-2z" fill="#fff"/><path d="M1 3h6v4q0 3-3 3T1 7z" fill="#fff"/></symbol>
  <symbol id="cast" viewBox="0 0 20 20"><path d="M4 3l14-2v13l-5 1M2 7h9v11H2zM7 11l6-5" fill="none" stroke="#fff" stroke-width="1.500"/><circle cx="15" cy="15" r="4" fill="#3a8ee0"/></symbol>
  <symbol id="net" viewBox="0 0 20 20"><path d="M5 3h14v10H5zM1 7h4v9H1M9 17h7M12 13v4" fill="none" stroke="#fff" stroke-width="1.500"/></symbol>
  <symbol id="vol" viewBox="0 0 20 20"><path d="M1 7h4l5-5v16l-5-5H1z" fill="none" stroke="#fff" stroke-width="1.300"/><path d="M13 7q2 3 0 6" fill="none" stroke="#fff" stroke-width="1.300"/><path d="M15 4q4 6 0 12M18 2q4 8 0 16" fill="none" stroke="#777" stroke-width="1.300"/></symbol>
  <symbol id="note" viewBox="0 0 24 24"><path d="M2 2h21v16h-7v5l-5-5H2z" fill="#fff"/><path d="M6 7h13M6 11h9" stroke="#202020" stroke-width="1.500"/></symbol>
</svg>

<header class="titlebar">
  <div class="quick">
    <button class="logo" aria-label="Revit"><span>R</span></button>
    <button aria-label="목록"><svg><use href="#list"/></svg></button>
    <button class="q-open" aria-label="열기"><svg><use href="#open"/></svg></button>
    <button aria-label="저장"><svg><use href="#save"/></svg></button>
    <button aria-label="동기화"><svg><use href="#sync"/></svg></button><button class="dd" aria-label="동기화 옵션"><svg><use href="#down"/></svg></button>
    <button aria-label="실행 취소"><svg><use href="#undo"/></svg></button><button class="dd" aria-label="실행 취소 목록"><svg><use href="#down"/></svg></button>
    <button aria-label="다시 실행"><svg><use href="#redo"/></svg></button><button class="dd" aria-label="다시 실행 목록"><svg><use href="#down"/></svg></button>
    <button aria-label="인쇄"><svg><use href="#print"/></svg></button>
    <button aria-label="PDF"><svg><use href="#pdf"/></svg></button>
    <span class="qsep"></span>
    <button class="on" aria-label="치수 고정"><svg><use href="#dimpin"/></svg></button>
    <span class="qsep"></span>
    <button aria-label="측정"><svg><use href="#measure"/></svg></button><button class="dd" aria-label="측정 옵션"><svg><use href="#down"/></svg></button>
    <button aria-label="정렬 치수"><svg><use href="#aligned"/></svg></button>
    <button aria-label="태그"><svg><use href="#tagq"/></svg></button>
    <button aria-label="문자"><svg><use href="#letterA"/></svg></button>
    <span class="qsep"></span>
    <button aria-label="3D 뷰"><svg><use href="#house"/></svg></button><button class="dd" aria-label="3D 뷰 옵션"><svg><use href="#down"/></svg></button>
    <button aria-label="단면도"><svg><use href="#section"/></svg></button>
    <button aria-label="가는 선"><svg><use href="#thin"/></svg></button>
    <span class="qsep"></span>
    <button aria-label="비활성 뷰 닫기"><svg><use href="#closeh"/></svg></button>
    <button aria-label="창 전환"><svg><use href="#switchw"/></svg></button><button class="dd" aria-label="창 목록"><svg><use href="#down"/></svg></button>
    <button class="dd cust" aria-label="사용자화"><svg><use href="#menu"/></svg></button>
  </div>
  <h1>Autodesk Revit 2025.4 - 1.BIM모델링 교각배치_차민정.rvt - 평면도: 평면도</h1>
  <div class="account">
    <svg class="tri" viewBox="0 0 6 10"><path d="M6 0v10L0 5z" fill="#333"/></svg>
    <button aria-label="검색"><svg><use href="#binoc"/></svg></button>
    <button class="usr"><svg><use href="#user"/></svg>hongchul0612<svg class="d8"><use href="#down"/></svg></button>
    <button aria-label="장바구니"><svg><use href="#cart"/></svg></button>
    <span class="qsep"></span>
    <button class="help" aria-label="도움말">?</button><svg class="d8"><use href="#down"/></svg>
  </div>
  <div class="winbtns">
    <button aria-label="최소화"><svg viewBox="0 0 16 16"><path d="M3 14h10" stroke="#333" stroke-width="3"/></svg></button>
    <button aria-label="이전 크기로"><svg viewBox="0 0 16 16"><path d="M5 6V2h10v7h-4M1 7h10v7H1zM1 8h10M5 3h10" fill="none" stroke="#333" stroke-width="1.800"/></svg></button>
    <button class="cx" aria-label="닫기"><svg><use href="#x"/></svg></button>
  </div>
</header>

<nav class="tabs">
  <button class="file">파일</button>
  <button>건축</button><button>구조</button><button>스틸</button><button>프리캐스트</button><button>시스템</button><button>삽입</button><button class="active">주석</button><button>해석</button><button>매스작업 &amp; 대지</button><button class="after">공동작업</button><button>뷰</button><button>관리</button><button>애드인</button><button>수정</button>
  <button class="toggle" aria-label="리본 최소화"><svg viewBox="0 0 34 12"><rect x="1" y="1" width="17" height="10" rx="2" fill="#e8eef6" stroke="#444" stroke-width="1.500"/><path d="M6 8h7l-3.500-4z" fill="#333"/><path d="M26 4h7l-3.500 4z" fill="#333"/></svg></button>
</nav>

<section class="ribbon">
  <div class="panel p-select">
    <div class="body"><button class="big sel"><svg class="cur"><use href="#cursor"/></svg>수정</button></div>
    <div class="cap">선택<svg><use href="#bigdown"/></svg></div>
  </div>
  <div class="panel p-dim">
    <div class="body">
      <button class="big"><svg><use href="#Laligned"/></svg>정렬</button>
      <button class="big"><svg><use href="#Llinear"/></svg>선형</button>
      <button class="big"><svg><use href="#Langle"/></svg>각도</button>
      <div class="col"><button><svg><use href="#radius"/></svg>반지름</button><button><svg><use href="#diam"/></svg>지름</button><button><svg><use href="#arc"/></svg>호&nbsp; 길이</button></div>
      <div class="col"><button><svg><use href="#spotE"/></svg>지정점&nbsp; 레벨</button><button><svg><use href="#spotC"/></svg>지정점&nbsp; 좌표</button><button><svg><use href="#spotS"/></svg>지정점&nbsp; 경사</button></div>
    </div>
    <div class="cap">치수<svg><use href="#bigdown"/></svg></div>
  </div>
  <div class="panel p-detail">
    <div class="body">
      <div class="col"><button><svg><use href="#dline"/></svg>상세 선</button><button><svg><use href="#region"/></svg>영역<svg class="d8"><use href="#down"/></svg></button><button><svg><use href="#comp"/></svg>구성요소<svg class="d8"><use href="#down"/></svg></button></div>
      <div class="col"><button><svg><use href="#cloud"/></svg>구름형 수정기호</button><button><svg><use href="#dgroup"/></svg>상세 그룹<svg class="d8"><use href="#down"/></svg></button><button><svg><use href="#insul"/></svg>단열재</button></div>
    </div>
    <div class="cap">상세정보</div>
  </div>
  <div class="panel p-text">
    <div class="body">
      <div class="col"><button><svg><use href="#letterA"/></svg>문자</button><button><svg viewBox="0 0 20 20"><text x="10" y="8" text-anchor="middle" class="abc">ABC</text><path d="M5 14l4 4 7-8" fill="none" stroke="#2faa4a" stroke-width="3"/></svg>맞춤법&nbsp; 검사</button><button><svg><use href="#find"/></svg>찾기/&nbsp; 대치</button></div>
    </div>
    <div class="cap">문자<svg class="launch" viewBox="0 0 8 8"><path d="M1 1l5 5M7 2v5H2" fill="none" stroke="#777" stroke-width="1.200"/></svg></div>
  </div>
  <div class="panel p-tag">
    <div class="body">
      <button class="big"><svg><use href="#Ltag"/></svg>카테고리별<br>태그</button>
      <button class="big"><svg><use href="#Ltags"/></svg>모든 항목<br>태그</button>
      <div class="col"><button><svg><use href="#beam"/></svg>보 주석</button><button><svg><use href="#multi"/></svg>다중 카테고리</button><button><svg><use href="#mat"/></svg>재료 태그</button></div>
      <div class="col"><button disabled><svg><use href="#area"/></svg>면적 태그</button><button><svg><use href="#room"/></svg>룸 태그<svg class="d8"><use href="#down"/></svg></button><button><svg><use href="#space"/></svg>공간&nbsp; 태그</button></div>
      <div class="col"><button><svg><use href="#vref"/></svg>뷰 참조</button><button><svg><use href="#tread"/></svg>디딤판&nbsp; 번호</button><button><svg><use href="#rebar"/></svg>다중&nbsp; 보강 철근<svg class="d8"><use href="#down"/></svg></button></div>
      <button class="big key"><svg><use href="#Lkey"/></svg>키노트<svg class="d8"><use href="#down"/></svg></button>
    </div>
    <div class="cap">태그<svg><use href="#bigdown"/></svg></div>
  </div>
  <div class="panel p-color">
    <div class="body">
      <div class="col"><button><svg><use href="#duct"/></svg>덕트 범례</button><button><svg><use href="#pipe"/></svg>배관 범례</button><button><svg><use href="#fill"/></svg>색상 채우기 범례</button></div>
    </div>
    <div class="cap">색상 채우기</div>
  </div>
  <div class="panel p-sym">
    <div class="body">
      <button class="big"><svg><use href="#Lsym"/></svg>기호</button>
      <div class="col"><button aria-label="스팬 방향"><svg><use href="#span"/></svg></button><button aria-label="계단 경로"><svg><use href="#sarrow"/></svg></button><button aria-label="경로"><svg><use href="#path"/></svg></button></div>
      <div class="col"><button aria-label="보 시스템"><svg><use href="#bsys"/></svg></button><button aria-label="팬"><svg><use href="#fan"/></svg></button><button aria-label="번호"><svg><use href="#p123"/></svg></button></div>
      <div class="col"><button aria-label="해치"><svg><use href="#hatch"/></svg></button></div>
    </div>
    <div class="cap">기호</div>
  </div>
</section>
<div class="optionsbar"></div>

<main>
  <aside class="browser">
    <div class="ptitle"><span>프로젝트 탐색기 - 1.BIM모델링 교각배치_차...</span><button aria-label="닫기"><svg><use href="#x"/></svg></button></div>
    <div class="pbtabs">
      <button class="on" aria-label="모두"><svg><use href="#pb-home"/></svg></button><button aria-label="뷰"><svg><use href="#views"/></svg></button><button aria-label="범례"><svg><use href="#legend"/></svg></button><button aria-label="일람표"><svg><use href="#sched"/></svg></button><button aria-label="시트"><svg><use href="#sheet"/></svg></button><button aria-label="패밀리"><svg><use href="#family"/></svg></button><button aria-label="그룹"><svg><use href="#group"/></svg></button><button aria-label="링크"><svg><use href="#link"/></svg></button>
    </div>
    <label class="search"><svg><use href="#mag"/></svg><input type="search" placeholder="검색" aria-label="검색"></label>
    <ul class="tree">
      <li><div class="row"><svg class="ex"><use href="#minus"/></svg><svg><use href="#views"/></svg>뷰 (전체)</div>
        <ul class="l1">
          <li><div class="row"><svg class="ex"><use href="#minus"/></svg>평면</div>
            <ul class="l2">
              <li><div class="row"><svg><use href="#plan"/></svg>1층 평면도</div></li>
              <li><div class="row"><svg><use href="#plan"/></svg>배치도</div></li>
              <li><div class="row"><svg><use href="#plan"/></svg>지붕 평면도</div></li>
              <li><div class="row"><svg><use href="#plan"/></svg><b>평면도</b></div></li>
            </ul></li>
          <li><div class="row"><svg class="ex"><use href="#plus"/></svg>천장 평면도</div></li>
          <li><div class="row"><svg class="ex"><use href="#minus"/></svg>3D 뷰</div>
            <ul class="l2">
              <li><div class="row"><svg><use href="#plan"/></svg>3D도</div></li>
              <li><div class="row"><svg><use href="#plan"/></svg>{3D}</div></li>
            </ul></li>
          <li><div class="row"><svg class="ex"><use href="#minus"/></svg>입면도 (건물 입면도)</div>
            <ul class="l2">
              <li><div class="row"><svg><use href="#plan"/></svg>남측면도</div></li>
              <li><div class="row hot"><svg><use href="#plan"/></svg>단면도</div></li>
              <li><div class="row"><svg><use href="#plan"/></svg>동측면도</div></li>
              <li><div class="row"><svg><use href="#plan"/></svg>북측면도</div></li>
              <li><div class="row"><svg><use href="#plan"/></svg>서측면도</div></li>
            </ul></li>
        </ul></li>
      <li><div class="row"><span class="ex"></span><svg><use href="#legend"/></svg>범례</div></li>
      <li><div class="row"><svg class="ex"><use href="#plus"/></svg><svg><use href="#sched"/></svg>일람표/수량 (전체)</div></li>
      <li><div class="row"><span class="ex"></span><svg><use href="#sheet"/></svg>시트 (전체)</div></li>
      <li><div class="row"><svg class="ex"><use href="#plus"/></svg><svg><use href="#family"/></svg>패밀리</div></li>
      <li><div class="row"><svg class="ex"><use href="#plus"/></svg><svg><use href="#group"/></svg>그룹</div></li>
      <li><div class="row"><span class="ex"></span><svg><use href="#link"/></svg>Revit 링크</div></li>
    </ul>
  </aside>

  <section class="work">
    <div class="doctabs">
      <button><svg class="dim"><use href="#house"/></svg>{3D}</button>
      <button><svg class="dim"><use href="#floor"/></svg>배치도</button>
      <button><svg><use href="#elev"/></svg>남측면도</button>
      <button><svg><use href="#elev"/></svg>단면도</button>
      <button><svg class="dim"><use href="#house"/></svg>3D도</button>
      <button class="active"><svg><use href="#floor"/></svg>평면도<svg class="tx"><use href="#x"/></svg></button>
      <svg class="tabmenu"><use href="#menu"/></svg>
    </div>
    <div class="viewrow">
      <div class="canvas">
        <svg class="drawing" viewBox="712 355 480 510" width="480" height="510">
          <g fill="none" stroke="#000" shape-rendering="crispEdges">
            <path d="M749.500 450.500h350v324h-350zM755.500 545.500h337v135h-337z"/>
            <path d="M736 393.500h376M749.500 381v61M1099.500 381v61"/>
            <path d="M1151.500 438v349M1108 450.500h56M1108 774.500h56"/>
          </g>
          <path d="M742 401l15-15M1092 401l15-15M1144 443l15 15M1144 767l15 15" stroke="#000" fill="none"/>
          <text x="923" y="379" text-anchor="middle">13000</text>
          <text x="1139" y="612" text-anchor="middle" transform="rotate(-90 1139 612)">12000</text>
        </svg>
        <div class="navbar">
          <svg class="nx" viewBox="0 0 10 10"><circle cx="5" cy="5" r="4" fill="#bbb"/><path d="M3 3l4 4M7 3L3 7" stroke="#fff"/></svg>
          <svg class="wheel" viewBox="0 0 26 26"><path d="M11 1h9v10q0 9-9 9A9 9 0 0 1 11 1z" fill="#eceef2" stroke="#999" stroke-width="1.300"/><circle cx="11" cy="11" r="4.500" fill="#fff" stroke="#999" stroke-width="1.300"/><path d="M3 17l4-4" stroke="#999"/><text x="13" y="23" class="t2d">2D</text></svg>
          <svg class="nd" viewBox="0 0 6 4"><path d="M0 0h6L3 4z" fill="#888"/></svg>
          <hr>
          <svg class="zoomr" viewBox="0 0 18 18"><path d="M2 2l9 9M11 2l-9 9M1 4V1h3M9 1h3v3M1 9v3h3" fill="none" stroke="#999"/><circle cx="12" cy="12" r="3.500" fill="#eef" stroke="#999" stroke-width="1.300"/><path d="M15 15l2 2" stroke="#888" stroke-width="2"/></svg>
          <svg class="nd" viewBox="0 0 6 4"><path d="M0 0h6L3 4z" fill="#888"/></svg>
          <svg class="nx end" viewBox="0 0 10 10"><circle cx="5" cy="5" r="4" fill="#bbb"/><path d="M3 4h4M3 6h4" stroke="#fff"/></svg>
        </div>
      </div>
      <div class="vscroll"><span class="sb up"><svg><use href="#chev"/></svg></span><span class="track"><i></i></span><span class="sb"><svg><use href="#chev"/></svg></span></div>
    </div>
    <div class="viewctl">
      <span class="scale">1 : 200</span>
      <div class="vicons">
        <svg><use href="#v1"/></svg><svg><use href="#v2"/></svg><svg><use href="#v3"/></svg><svg><use href="#v4"/></svg><svg><use href="#v5"/></svg><svg><use href="#v6"/></svg><svg><use href="#v7"/></svg><svg><use href="#v8"/></svg><svg><use href="#v9"/></svg><svg><use href="#v10"/></svg><svg><use href="#v11"/></svg>
      </div>
      <div class="hscroll"><span class="sb left"><svg><use href="#chev"/></svg></span><span class="track"><i></i></span><span class="sb right"><svg><use href="#chev"/></svg></span></div>
      <svg class="grip" viewBox="0 0 12 12"><path d="M8 2h2v2H8zM8 7h2v2H8zM3 7h2v2H3z" fill="#888"/></svg>
    </div>
  </section>

  <aside class="props">
    <div class="ptitle"><span>특성</span><button aria-label="닫기"><svg><use href="#x"/></svg></button></div>
    <button class="type"><span class="thumb"><svg viewBox="0 0 40 40"><path d="M2 2h23v2h12v12h2v22H16v-2H2z" fill="#f0f0f0" stroke="#999" stroke-width="1.700"/><path d="M25 4v12h12M25 16h-9v20" fill="none" stroke="#999" stroke-width="1.500" stroke-dasharray="3 2"/></svg></span>평면도<svg class="td"><use href="#bigdown"/></svg></button>
    <div class="inst">
      <label class="combo"><select aria-label="요소"><option>평면도: 평면도</option></select><svg><use href="#chev"/></svg></label>
      <button><svg><use href="#etype"/></svg>유형 편집</button>
    </div>
    <div class="gridwrap">
      <div class="gridclip">
      <table>
        <colgroup><col class="c1"><col class="c2"><col></colgroup>
        <tbody>
        <tr class="h"><th colspan="3"><div>그래픽<svg><use href="#dbl"/></svg></div></th></tr>
        <tr><th>뷰 축척</th><td class="edit"><input value="1 : 200" aria-label="뷰 축척"></td><td></td></tr>
        <tr class="off"><th>축척 값 &nbsp; &nbsp; 1:</th><td>200</td><td></td></tr>
        <tr><th>모델 표시</th><td>보통</td><td></td></tr>
        <tr><th>상세 수준</th><td>낮음</td><td></td></tr>
        <tr><th>부품 가시성</th><td>원본 표시</td><td></td></tr>
        <tr><th>가시성/그래픽 재...</th><td class="b"><button>편집...</button></td><td></td></tr>
        <tr><th>그래픽 화면표시 ...</th><td class="b"><button>편집...</button></td><td></td></tr>
        <tr><th>방향</th><td>도북</td><td></td></tr>
        <tr><th>벽 결합 화면표시</th><td>모든 벽 결합 지우기</td><td></td></tr>
        <tr><th>분야</th><td>건축</td><td></td></tr>
        <tr><th>은선 표시</th><td>분야별</td><td></td></tr>
        <tr><th>색상표 위치</th><td>배경</td><td></td></tr>
        <tr><th>색상표</th><td class="b"><button>&lt;없음&gt;</button></td><td></td></tr>
        <tr><th>시스템 색상표</th><td class="b"><button>편집...</button></td><td></td></tr>
        <tr><th>기본 해석 화면표...</th><td>없음</td><td></td></tr>
        <tr><th><label for="sun">태양 경로</label></th><td><input type="checkbox" id="sun"></td><td></td></tr>
        <tr class="h"><th colspan="3"><div>언더레이<svg><use href="#dbl"/></svg></div></th></tr>
        <tr><th>범위: 기준 레벨</th><td>없음</td><td></td></tr>
        <tr class="off"><th>범위: 상단 레벨</th><td>무한</td><td></td></tr>
        <tr class="off"><th>언더레이 방향</th><td>아래쪽 보기</td><td></td></tr>
        <tr class="h"><th colspan="3"><div>범위<svg><use href="#dbl"/></svg></div></th></tr>
        <tr><th><label for="c1">뷰 자르기</label></th><td><input type="checkbox" id="c1"></td><td></td></tr>
        <tr><th><label for="c2">자르기 영역 보기</label></th><td><input type="checkbox" id="c2"></td><td></td></tr>
        <tr><th><label for="c3">주석 자르기</label></th><td><input type="checkbox" id="c3"></td><td></td></tr>
        <tr><th>뷰 범위</th><td class="b"><button>편집...</button></td><td></td></tr>
        </tbody>
      </table>
      </div>
      <div class="vscroll"><span class="sb up"><svg><use href="#chev"/></svg></span><span class="track"><i></i></span><span class="sb"><svg><use href="#chev"/></svg></span></div>
    </div>
    <div class="pfoot">
      <button class="on" aria-label="그룹별"><svg><use href="#sortg"/></svg></button>
      <button aria-label="오름차순"><span class="az"><b>A</b><i>Z</i></span><svg class="da"><use href="#darrow"/></svg></button>
      <button aria-label="내림차순"><span class="az"><i>Z</i><b>A</b></span><svg class="da"><use href="#darrow"/></svg></button>
      <button class="apply" disabled>적용</button>
    </div>
  </aside>
</main>

<footer class="status">
  <p>선택하려면 항목을 클릭하고, 다른 항목을 선택하려면 Tab 키, 추가하려면 Ctrl 키, 선택 취소하려면 Shift 키를 누</p>
  <svg class="ws"><use href="#ws"/></svg>
  <label class="combo wsc"><select aria-label="작업세트"><option></option></select><svg><use href="#chev"/></svg></label>
  <span class="pe"><svg><use href="#person"/></svg>:0</span>
  <svg class="o1"><use href="#opts"/></svg><svg class="o2"><use href="#opts2"/></svg>
  <label class="combo mdl"><select aria-label="설계 옵션"><option>주모델</option></select><svg><use href="#chev"/></svg></label>
  <div class="selicons"><svg><use href="#s1"/></svg><svg><use href="#s2"/></svg><svg><use href="#s3"/></svg><svg><use href="#s4"/></svg><svg><use href="#s5"/></svg><svg><use href="#s6"/></svg><span><svg><use href="#filter"/></svg>:0</span></div>
</footer>

<div class="taskbar">
  <div class="apps">
    <button class="sys" aria-label="시작"><svg class="w20"><use href="#win"/></svg></button>
    <button class="sys" aria-label="검색"><svg class="w28"><use href="#tsearch"/></svg></button>
    <button class="sys" aria-label="작업 보기"><svg class="w22"><use href="#tview"/></svg></button>
    <button class="talk" aria-label="TALK"><svg viewBox="0 0 30 30"><rect width="30" height="30" rx="3" fill="#fae100"/><path d="M15 5c15 0 15 18 0 18l-5 4 1-5C-1 18 3 5 15 5z" fill="#3c1e1e"/><text x="15" y="17" text-anchor="middle" class="talkt">TALK</text></svg></button>
    <button class="run" aria-label="Chrome"><svg><use href="#chrome"/></svg></button>
    <button><span class="adsk red"><b>A</b><i>CAD</i></span></button>
    <button class="run cur"><span class="adsk blue"><b>R</b><i>RVT</i></span></button>
    <button class="run"><span class="adsk mag"><b>C</b><i>C3D</i></span></button>
    <button><span class="adsk blue"><b>N</b><i>MAN</i></span></button>
    <button aria-label="Excel"><svg><use href="#excel"/></svg></button>
    <button aria-label="메신저"><svg><use href="#face"/></svg></button>
    <button class="run" aria-label="탐색기"><svg><use href="#folder"/></svg></button>
    <button class="run" aria-label="Edge"><svg><use href="#edge"/></svg></button>
    <button class="run" aria-label="PDF"><svg viewBox="0 0 30 30"><use href="#pdfbot"/><text x="15" y="17" text-anchor="middle" class="pdft">PDF</text></svg></button>
  </div>
  <div class="tray">
    <svg class="w14"><use href="#tup"/></svg><svg><use href="#batt"/></svg><svg><use href="#cast"/></svg><svg><use href="#net"/></svg><svg><use href="#vol"/></svg>
    <span class="ime">가</span><span class="ime2">호</span>
    <time><span>오후 4:00</span><span>2025-04-15</span></time>
    <span class="notes"><svg><use href="#note"/></svg><b>2</b></span>
  </div>
</div>
</body>
</html>
```
FILE: styles.css
```css
* { box-sizing: border-box; }
html, body { height: 100%; }
body {
  margin: 0;
  display: flex;
  flex-direction: column;
  overflow: hidden;
  background: #f5f5f5;
  color: #3c3c3c;
  font: 350 16px/20px "Noto Sans CJK KR", "Noto Sans", sans-serif;
  white-space: nowrap;
}
button, input, select { font: inherit; color: inherit; background: none; border: 0; padding: 0; margin: 0; }
select { appearance: none; width: 100%; outline: 0; }
svg { display: block; flex: none; width: 20px; height: 20px; }
.defs { position: absolute; width: 0; height: 0; }
.d8 { width: 8px; height: 6px; }
ul { list-style: none; margin: 0; padding: 0; }
p, h1 { margin: 0; font-weight: inherit; font-size: 16px; }

/* title bar */
.titlebar { display: flex; align-items: center; height: 34px; padding-bottom: 3px; background: #d9d9d9; }
.quick { display: flex; align-items: center; flex: 0 0 844px; }
.quick button { display: flex; justify-content: center; flex: 0 0 30px; }
.quick .dd { flex-basis: 15px; }
.quick .dd svg { width: 8px; height: 6px; }
.quick .cust { flex-basis: 22px; }
.quick .cust svg { width: 10px; height: 10px; }
.quick .q-open { flex-basis: 36px; }
.quick .on { height: 27px; align-items: center; background: #cfe4ee; border: 1px solid #7cc0e4; }
.qsep { width: 1px; height: 26px; margin: 0 4px; background: #b4b4b4; }
.quick .logo { width: 26px; height: 28px; flex: 0 0 26px; margin: 0 2px 0 3px; background: linear-gradient(#1a72ff 68%, #0a3a8c 68%); border-left: 5px solid #3d90ff; color: #fff; font-weight: 700; line-height: 20px; }
.titlebar h1 { flex: 1; line-height: 22px; padding-bottom: 4px; }
.account { display: flex; align-items: center; gap: 8px; margin-right: 77px; line-height: 24px; }
.account .tri { width: 6px; height: 10px; margin-right: 3px; }
.account button { display: flex; align-items: center; gap: 8px; }
.account .usr { font-size: 15px; margin-right: 5px; }
.account .qsep { margin: 0 2px; }
.account .help { width: 21px; height: 21px; justify-content: center; border: 2px solid #555; border-radius: 50%; background: #fff; color: #1f5cc0; font-weight: 700; }
.winbtns { display: flex; gap: 16px; padding-right: 9px; }
.winbtns svg { width: 16px; height: 16px; }
.winbtns .cx svg { width: 14px; height: 14px; }
.winbtns .cx { color: #333; }

/* ribbon tabs */
.tabs { display: flex; gap: 1px; height: 26px; background: #d9d9d9; padding-left: 1px; }
.tabs button { padding: 0 12px 2px; line-height: 22px; }
.tabs .file { background: #2a7ab0; color: #fff; padding: 0 13px 2px; margin-right: 1px; }
.tabs .active { background: #f5f5f5; }
.tabs .after { margin-left: 2px; }
.tabs .toggle { padding-left: 27px; }
.tabs .toggle svg { width: 34px; height: 12px; }

/* ribbon */
.ribbon { display: flex; height: 124px; padding-top: 3px; border-bottom: 1px solid #d4d4d4; background: #f5f5f5; }
.panel { display: flex; flex-direction: column; height: 118px; border-right: 1px solid #dcdcdc; }
.panel:last-child { border-right: 0; }
.body { display: grid; flex: 1; align-items: start; }
.cap { display: flex; justify-content: center; align-items: center; gap: 9px; height: 24px; line-height: 22px; }
.cap svg { width: 10px; height: 8px; }
.big { display: flex; flex-direction: column; align-items: center; padding-top: 4px; line-height: 20px; }
.big svg { width: 40px; height: 40px; margin-bottom: 4px; }
.big .d8 { width: 8px; height: 6px; margin-top: 4px; }
.col { display: grid; grid-auto-rows: 31px; }
.col button { display: flex; align-items: center; gap: 7px; text-align: left; }
.col button:disabled { color: #bbb; }
.col .d8 { margin-left: 4px; }
.p-select { width: 63px; }
.p-select .body { padding: 3px 8px 0 8px; }
.sel { height: 89px; padding-top: 1px; background: #dceef7; border: 1px solid #7cc0e4; }
.sel .cur { width: 24px; height: 42px; margin-bottom: 2px; }
.p-dim { width: 366px; }
.p-dim .body { grid-template-columns: 48px 48px 48px 93px 1fr; padding-left: 3px; }
.p-dim .col { padding-left: 4px; }
.p-detail { width: 270px; }
.p-detail .body { grid-template-columns: 115px 1fr; padding-left: 7px; }
.p-text { width: 129px; }
.p-text .body { padding-left: 7px; }
.p-text .cap { position: relative; }
.p-text .launch { position: absolute; right: 4px; width: 8px; height: 8px; }
.abc { font: 700 8px "Liberation Sans", sans-serif; fill: #666; }
.p-tag { width: 645px; }
.p-tag .body { grid-template-columns: 84px 74px 134px 109px 158px 1fr; padding-left: 1px; }
.p-tag .key { border-left: 1px solid #dcdcdc; height: 92px; }
.p-color { width: 159px; }
.p-color .body { padding-left: 7px; }
.p-sym { width: 146px; }
.p-sym .body { grid-template-columns: 47px 30px 31px 1fr; padding-left: 6px; }
.p-sym .big { width: 38px; }
.optionsbar { height: 35px; border-bottom: 2px solid #c0c0c0; }

/* main area */
main { display: grid; grid-template-columns: 347px minmax(0, 1fr) 340px; flex: 1; min-height: 0; }
.ptitle { display: flex; justify-content: space-between; align-items: center; height: 20px; padding: 0 5px 2px; background: #d9d9d9; line-height: 18px; }
.ptitle button { color: #777; }
.ptitle svg { width: 13px; height: 13px; }
.browser { display: flex; flex-direction: column; border-right: 2px solid #c0c0c0; background: #fff; box-shadow: inset 2px 0 #eee, inset -4px 0 #eee, inset 0 -3px #eee; }
.pbtabs { display: flex; height: 30px; margin: 0 4px 0 2px; background: #cacaca; }
.pbtabs button { width: 30px; display: grid; place-items: center; }
.pbtabs .on { background: #fff; }
.search { display: flex; align-items: center; gap: 11px; height: 32px; margin: 10px 14px 9px 12px; padding-left: 10px; border: 1px solid #e0e0e0; }
.search input { flex: 1; min-width: 0; outline: 0; }
.search input::placeholder { color: #a8a8a8; opacity: 1; }
.tree { color: #000; margin: 0 4px 0 2px; }
.row { display: flex; align-items: center; gap: 6px; height: 25px; padding-left: 6px; }
.row b { font-weight: 500; }
.row .ex { width: 10px; height: 10px; margin-right: 4px; flex: none; }
.l1 li { position: relative; }
.l1 > li > .row { padding-left: 26px; gap: 8px; }
.l2 .row { padding-left: 67px; }
.row.hot { background: #f1f1f1; border: 1px solid #e0e0e0; padding-left: 66px; }
.l1 li::before { content: ""; position: absolute; top: 13px; left: 10px; width: 12px; border-top: 1px dashed #bbb; }
.l1 > li::after { content: ""; position: absolute; top: 0; bottom: 0; left: 10px; border-left: 1px dashed #bbb; }
.l1 > li:last-child::after { bottom: auto; height: 13px; }
.l1 .l2 li::before { left: 30px; width: 31px; }
.l2 li::after { content: ""; position: absolute; top: 0; height: 25px; left: 30px; border-left: 1px dashed #bbb; }
.l2 li:last-child::after { height: 13px; }

.work { display: flex; flex-direction: column; min-width: 0; background: #fff; }
.doctabs { display: flex; height: 25px; background: #cacaca; }
.doctabs button { display: flex; align-items: center; gap: 11px; flex: 0 1 160px; padding: 0 6px 2px; line-height: 22px; color: #3c3c3c; }
.doctabs .dim { color: #888; opacity: .6; }
.doctabs .active { background: #fff; color: #222; font-weight: 500; }
.doctabs .active svg { color: #666; }
.doctabs .tx { width: 13px; height: 13px; margin-left: auto; }
.tabmenu { width: 10px; height: 10px; margin: 8px 7px 0 auto; color: #777; }
.viewrow { display: flex; flex: 1; min-height: 0; padding-top: 1px; }
.canvas { position: relative; flex: 1; display: grid; place-items: center; }
.drawing { width: 480px; height: 510px; }
.drawing text { font: 17px "Liberation Sans", Arial, sans-serif; fill: #000; stroke: #000; stroke-width: .3px; }
.navbar { position: absolute; top: 1px; right: 1px; width: 35px; height: 118px; display: flex; flex-direction: column; align-items: center; border: 2px solid #bcbcbc; border-radius: 5px; background: #f5f5f5; }
.navbar hr { width: 26px; height: 1px; margin: 3px 0 7px; border: 0; background: #bbb; }
.nx { width: 9px; height: 9px; align-self: flex-end; margin: 1px 2px 10px 0; }
.nx.end { margin: auto 2px 2px 0; }
.wheel { width: 26px; height: 26px; }
.t2d { font: 700 9px "Open Sans", sans-serif; fill: #5a88b8; }
.nd { width: 6px; height: 4px; margin-top: 3px; }
.zoomr { width: 18px; height: 18px; }
.zoomr + .nd { margin-top: 9px; }
.vscroll { display: flex; flex-direction: column; width: 22px; background: #e8e8e8; border-right: 1px solid #d4d4d4; }
.sb { display: grid; place-items: center; flex: 0 0 21px; background: #f0f0f0; }
.sb svg { width: 12px; height: 12px; }
.up svg { transform: rotate(180deg); }
.left svg { transform: rotate(90deg); }
.right svg { transform: rotate(-90deg); }
.track { flex: 1; display: flex; flex-direction: column; align-items: center; }
.track i { background: #8a8a8a; border-radius: 5px; }
.work .vscroll { margin-right: 2px; }
.work .vscroll .track { justify-content: center; }
.work .vscroll i { width: 10px; height: 22px; }
.viewctl { display: flex; align-items: center; height: 22px; margin: 0 2px 2px 2px; background: #f0f0f0; border-bottom: 1px solid #c4c4c4; }
.scale { flex: 0 0 111px; padding-left: 32px; font-size: 15px; }
.vicons { display: flex; gap: 14px; flex: 0 0 367px; }
.hscroll { display: flex; flex: 1; align-self: stretch; background: #e8e8e8; }
.hscroll .track { flex-direction: row; }
.hscroll i { width: 22px; height: 10px; margin-left: 49%; }
.grip { width: 12px; height: 12px; margin: 0 4px 0 6px; }

/* properties */
.props { display: flex; flex-direction: column; min-height: 0; border-left: 2px solid #c0c0c0; background: #f5f5f5; }
.props .ptitle { padding-right: 1px; }
.type { display: flex; align-items: center; gap: 7px; flex: 0 0 87px; margin: 1px 2px 0 3px; padding: 0 7px 0 2px; border: 1px solid #bbb; border-bottom: 0; text-align: left; }
.thumb { display: grid; place-items: center; width: 82px; height: 82px; border: 1px solid #bbb; }
.thumb svg { width: 40px; height: 40px; }
.type .td { width: 10px; height: 8px; margin-left: auto; opacity: .6; }
.inst { display: flex; align-items: center; justify-content: space-between; height: 30px; padding: 0 10px 0 2px; }
.inst button { display: flex; align-items: center; gap: 6px; }
.inst button svg { width: 17px; height: 17px; }
.combo { display: flex; align-items: center; width: 236px; height: 30px; padding: 0 5px; border-bottom: 2px solid #c8c8c8; }
.combo svg { width: 10px; height: 10px; }
.gridwrap { display: flex; flex: 1; min-height: 0; margin-top: 3px; padding-left: 2px; }
.gridclip { flex: 1; overflow: hidden; min-height: 0; }
table { width: 100%; border-collapse: collapse; table-layout: fixed; background: #fff; color: #000; }
.c1 { width: 149px; }
.c2 { width: 149px; }
tr { height: 24px; }
th, td { padding: 0 0 1px 3px; border: 1px solid #e6e6e6; border-left: 0; height: 24px; line-height: 20px; font-weight: inherit; text-align: left; overflow: hidden; }
th { padding-left: 12px; }
.off { color: #8c8c8c; }
.h th { padding: 0 6px 1px 3px; background: #e4e4e4; border-color: #e4e4e4; color: #333; font-weight: 500; }
.h div { display: flex; justify-content: space-between; align-items: center; }
.h svg { width: 8px; height: 10px; }
td.b, td.edit { padding: 0 1px; }
td.b button { display: block; width: 100%; height: 21px; border: 1px solid #b4b4b4; background: #f5f5f5; color: #444; line-height: 18px; }
td.edit input { display: block; width: 100%; height: 23px; padding-left: 6px; border: 1px solid #000; }
input[type=checkbox] { appearance: none; display: block; width: 14px; height: 14px; margin-left: 1px; border: 1px solid #777; background: #fff; }
.gridwrap .sb { flex-basis: 20px; }
.gridwrap .track i { width: 10px; flex: 0 0 63%; margin-top: 1px; }
.pfoot { display: flex; align-items: center; gap: 5px; height: 31px; padding: 0 4px 3px; background: #ececec; }
.pfoot button { display: flex; align-items: center; justify-content: center; gap: 3px; width: 27px; height: 27px; background: #f3f3f3; }
.pfoot .on { background: #91cbe8; border: 1px solid #7ab8d8; border-radius: 3px; }
.pfoot .on svg { width: 18px; height: 18px; }
.pfoot .apply { width: 96px; height: 23px; margin-left: auto; border: 1px solid #ccc; border-radius: 3px; color: #a0a0a0; }
.az { display: flex; flex-direction: column; font: 11px/10px "Open Sans", sans-serif; }
.az b { color: #1e80d0; font-weight: 600; }
.az i { font-style: normal; }
.da { width: 7px; height: 20px; }

/* status bar */
.status { display: flex; align-items: center; height: 31px; padding-left: 2px; background: #f5f5f5; border-bottom: 1px solid #d4d4d4; }
.status p { flex: 0 0 752px; }
.status .combo { height: 29px; }
.status .wsc { width: 260px; margin: 0 6px; }
.status .combo svg { opacity: .6; }
.pe { display: flex; align-items: center; width: 60px; color: #999; }
.o1 { color: #555; margin-right: 11px; }
.o2 { color: #999; margin-right: 4px; }
.status .mdl { color: #999; width: 260px; }
.selicons { display: flex; gap: 10px; margin-left: auto; padding-right: 78px; }
.selicons span { display: flex; color: #444; }

/* taskbar */
.taskbar { display: flex; justify-content: space-between; height: 50px; background: #202020; color: #fff; }
.apps { display: flex; }
.apps button { display: grid; place-items: center; width: 61px; margin-right: 1px; border-bottom: 3px solid transparent; padding: 2px 2px 0 0; }
.apps .sys { width: 60px; margin-right: 0; }
.apps .talk { margin-left: 4px; background: #a85c28; border-color: #ff7a00; padding-right: 0; }
.apps svg { width: 30px; height: 30px; }
.apps .w20 { width: 21px; height: 21px; }
.apps .w28 { width: 28px; height: 28px; }
.apps .w22 { width: 22px; height: 22px; }
.apps .run { background: linear-gradient(#76b9ed, #76b9ed) 50% 100% / 51px 3px no-repeat; background-origin: border-box; }
.apps .cur { background-color: #4d4d4d; background-size: 61px 3px; }
.talkt { font: 700 8px "Liberation Sans", sans-serif; fill: #fae100; }
.pdft { font: 700 7px "Liberation Sans", sans-serif; fill: #fff; }
.adsk { display: flex; flex-direction: column; width: 28px; height: 30px; border-left: 5px solid; text-align: center; }
.adsk b { flex: 0 0 21px; font: 700 17px/21px "Open Sans", sans-serif; }
.adsk i { flex: 1; font: 700 7px/9px "Open Sans", sans-serif; }
.red { background: #e51050; border-color: #f04a7c; }
.red i { background: #7c0828; }
.blue { background: #186cff; border-color: #5c9cff; }
.blue i { background: #0c3c90; }
.adsk.mag { background: #b01080; border-color: #cc50a4; }
.mag i { background: #600848; }
.tray { display: flex; align-items: center; padding-right: 29px; }
.tray svg { margin-right: 9px; }
.tray .w14 { width: 14px; height: 14px; margin-right: 14px; }
.ime { margin-left: 5px; font-size: 18px; }
.ime2 { margin: 0 22px 0 20px; }
.tray time { display: flex; flex-direction: column; align-items: center; font-size: 15px; line-height: 23px; width: 80px; margin-right: 18px; }
.notes { position: relative; }
.notes svg { width: 24px; height: 24px; margin: 0; }
.notes b { position: absolute; left: 11px; top: 11px; width: 18px; height: 18px; border: 1px solid #fff; border-radius: 50%; background: #202020; font: 12px/16px "Noto Sans CJK KR", sans-serif; text-align: center; }
```
